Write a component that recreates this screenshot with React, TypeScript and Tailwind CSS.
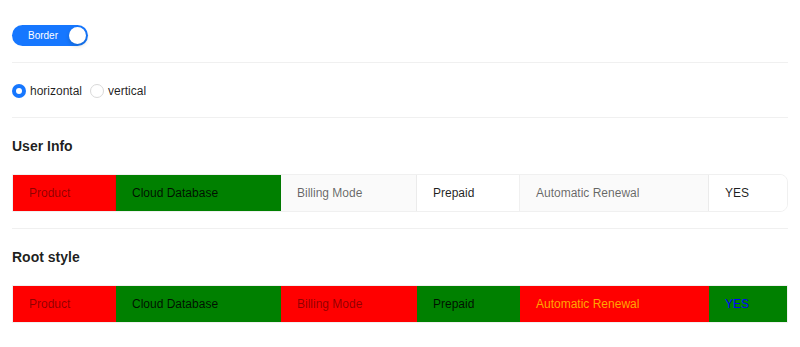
import React, { useState } from "react";

type Item = { label: string; value: string };

const items: Item[] = [
  { label: "Product", value: "Cloud Database" },
  { label: "Billing Mode", value: "Prepaid" },
  { label: "Automatic Renewal", value: "YES" },
];

// column widths for label / content cells, left to right (border included)
const widths = ["w-[103px]", "w-[165px]", "w-[136px]", "w-[103px]", "w-[189px]", "flex-1"];

function Divider() {
  return <div className="h-px bg-[#f0f0f0]" />;
}

function Radio({ checked, label, onClick }: { checked: boolean; label: string; onClick: () => void }) {
  return (
    <label className="flex items-center gap-1 cursor-pointer" onClick={onClick}>
      {checked ? (
        <span className="w-[14px] h-[14px] rounded-full bg-[#1677ff] flex items-center justify-center">
          <span className="w-[6px] h-[6px] rounded-full bg-white" />
        </span>
      ) : (
        <span className="w-[14px] h-[14px] rounded-full border border-[#d9d9d9] bg-white" />
      )}
      <span className="text-[12px] leading-[22px] text-[rgba(0,0,0,0.88)]">{label}</span>
    </label>
  );
}

export default function App() {
  const [border, setBorder] = useState(true);
  const [layout, setLayout] = useState("horizontal");

  return (
    <div className="min-h-screen bg-white px-3 pt-[25px] font-['Liberation_Sans',Arial,sans-serif]">
      {/* switch */}
      <button
        onClick={() => setBorder(!border)}
        className="w-[76px] h-[21px] rounded-full bg-[#1677ff] flex items-center pl-4 pr-[2px] justify-between mb-4"
      >
        <span className="text-[10px] text-white leading-none">Border</span>
        <span className="w-[17px] h-[17px] rounded-full bg-white shadow-[0_2px_4px_rgba(0,35,11,0.2)]" />
      </button>

      <Divider />

      <div className="flex items-center gap-2 mt-[17px] mb-[15px]">
        <Radio checked={layout === "horizontal"} label="horizontal" onClick={() => setLayout("horizontal")} />
        <Radio checked={layout === "vertical"} label="vertical" onClick={() => setLayout("vertical")} />
      </div>

      <Divider />

      {/* User Info */}
      <div className="text-[14px] font-bold leading-[24px] text-[rgba(0,0,0,0.88)] mt-4 mb-4">User Info</div>
      <div className="flex border border-[#f0f0f0] rounded-r-lg overflow-hidden text-[12px] leading-5 mb-4">
        {items.map((it, i) => {
          const labelBg = i === 0 ? "bg-[#ff0000] text-[rgba(0,0,0,0.45)]" : "bg-[#fafafa] text-[rgba(0,0,0,0.6)]";
          const valueBg = i === 0 ? "bg-[#008000]" : "bg-white";
          return (
            <React.Fragment key={it.label}>
              <div className={`${widths[i * 2]} ${labelBg} px-4 py-2 border-r border-[rgba(5,5,5,0.06)]`}>{it.label}</div>
              <div
                className={`${widths[i * 2 + 1]} ${valueBg} px-4 py-2 text-[rgba(0,0,0,0.88)] ${
                  i < 2 ? "border-r border-[rgba(5,5,5,0.06)]" : ""
                }`}
              >
                {it.value}
              </div>
            </React.Fragment>
          );
        })}
      </div>

      <Divider />

      {/* Root style */}
      <div className="text-[14px] font-bold leading-[24px] text-[rgba(0,0,0,0.88)] mt-4 mb-4">Root style</div>
      <div className="flex border border-[#f0f0f0] text-[12px] leading-5">
        <div className="w-[103px] bg-[#ff0000] text-[rgba(0,0,0,0.45)] px-4 py-2">Product</div>
        <div className="w-[165px] bg-[#008000] text-[rgba(0,0,0,0.88)] px-4 py-2">Cloud Database</div>
        <div className="w-[136px] bg-[#ff0000] text-[rgba(0,0,0,0.45)] px-4 py-2">Billing Mode</div>
        <div className="w-[103px] bg-[#008000] text-[rgba(0,0,0,0.88)] px-4 py-2">Prepaid</div>
        <div className="w-[189px] bg-[#ff0000] text-[#ffa500] px-4 py-2">Automatic Renewal</div>
        <div className="flex-1 bg-[#008000] text-[#0000ff] px-4 py-2">YES</div>
      </div>
    </div>
  );
}
